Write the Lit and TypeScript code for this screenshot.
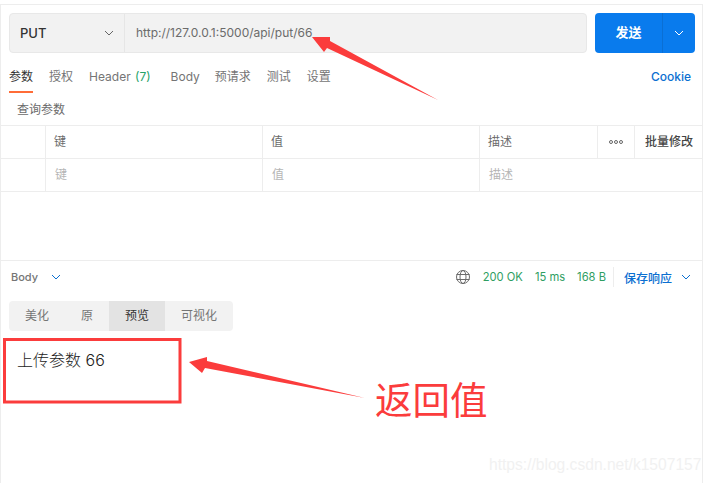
import { LitElement, css, html, svg } from "lit";
import { customElement } from "lit/decorators.js";

const TABS = [
  { label: "参数", active: true },
  { label: "授权" },
  { label: "Header", count: "(7)" },
  { label: "Body", wide: true },
  { label: "预请求" },
  { label: "测试" },
  { label: "设置" },
];

const chevron = (color: string) => html`
  <svg class="chevron" width="10" height="6" viewBox="0 0 10 6" fill="none">
    <path d="M1 1l4 4 4-4" stroke=${color} stroke-width="1"></path>
  </svg>
`;

@customElement("app-root")
export class AppRoot extends LitElement {
  static styles = css`
    :host {
      display: block;
      position: relative;
      width: 713px;
      height: 483px;
      overflow: hidden;
      background: #fff;
      font-family: Inter, "Noto Sans CJK SC", sans-serif;
      font-size: 12px;
      color: #6b6b6b;
    }
    .frame {
      box-sizing: border-box;
      width: 703px;
      height: 479px;
      margin-top: 4px;
      border: 1px solid #ededed;
      border-width: 1px 1px 0 1px;
      display: flex;
      flex-direction: column;
    }

    /* request bar */
    .request {
      display: flex;
      gap: 8px;
      margin: 8px 7px 0 8px;
      height: 40px;
    }
    .url-box {
      flex: 1;
      display: flex;
      background: #f2f2f2;
      border: 1px solid #e8e8e8;
      border-radius: 4px;
      box-sizing: border-box;
    }
    .method {
      box-sizing: border-box;
      width: 115px;
      padding: 0 10px;
      display: flex;
      align-items: center;
      justify-content: space-between;
      border-right: 1px solid #e6e6e6;
      font-size: 13px;
      font-weight: 500;
      color: #333;
    }
    .url {
      padding-left: 11px;
      line-height: 37px;
      color: #6b6b6b;
    }
    .send {
      width: 100px;
      display: flex;
      background: #097bed;
      border-radius: 4px;
      color: #fff;
    }
    .send-label {
      width: 67px;
      text-align: center;
      line-height: 38px;
      font-size: 13px;
      font-weight: 700;
      border-right: 1px solid #0a6fd4;
    }
    .send-more {
      flex: 1;
      display: flex;
      align-items: center;
      justify-content: center;
    }

    /* tabs */
    .tabs {
      display: flex;
      align-items: stretch;
      gap: 16px;
      height: 31px;
      margin: 9px 11px 0 8px;
    }
    .tab {
      padding-top: 6px;
      box-sizing: border-box;
      line-height: 17px;
      color: #757575;
      white-space: nowrap;
    }
    .tab.active {
      color: #333;
      border-bottom: 2px solid #ff6c37;
    }
    .tab.wide {
      margin: 0 -1px 0 4px;
    }
    .count {
      color: #26a269;
      margin-left: 1px;
    }
    .cookie {
      margin-left: auto;
      padding-top: 6px;
      line-height: 17px;
      font-weight: 500;
      color: #0b6fd1;
    }
    .query-title {
      height: 32px;
      padding-left: 16px;
      line-height: 33px;
      color: #6b6b6b;
    }

    /* params table */
    .table {
      display: grid;
      grid-template-columns: 45px 217px 217px 118px 37px 1fr;
      border-top: 1px solid #ededed;
    }
    .cell {
      box-sizing: border-box;
      height: 33px;
      padding-left: 8px;
      line-height: 32px;
      border-right: 1px solid #ededed;
      border-bottom: 1px solid #ededed;
      color: #6b6b6b;
    }
    .cell.last {
      border-right: 0;
      padding-left: 10px;
      font-weight: 500;
      color: #444;
    }
    .cell.hint {
      padding-left: 9px;
      color: #b5b5b5;
    }
    .cell.span {
      grid-column: span 3;
      border-right: 0;
    }
    .dots {
      display: flex;
      align-items: center;
      justify-content: center;
      gap: 1px;
      padding: 0;
    }
    .dots i {
      width: 4px;
      height: 4px;
      border: 1px solid #666;
      border-radius: 50%;
      box-sizing: border-box;
    }

    /* response */
    .response {
      margin-top: 68px;
      border-top: 1px solid #ededed;
    }
    .response-bar {
      display: flex;
      align-items: center;
      height: 32px;
      padding: 0 11px 0 10px;
      font-size: 11px;
    }
    .body-label {
      font-weight: 500;
      color: #757575;
      margin-right: 13px;
    }
    .status {
      margin-left: auto;
      display: flex;
      align-items: center;
      font-size: 11.2px;
      color: #2f9e62;
    }
    .status span {
      margin-left: 12px;
    }
    .status .first {
      margin-left: 12px;
    }
    .save {
      display: flex;
      align-items: center;
      gap: 9px;
      margin-left: 7px;
      padding-left: 10px;
      border-left: 1px solid #ededed;
      height: 20px;
      font-size: 12px;
      color: #0b6fd1;
      font-weight: 500;
    }
    .seg {
      display: inline-flex;
      height: 30px;
      margin: 8px 0 0 8px;
      background: #f2f2f2;
      border-radius: 4px;
      overflow: hidden;
    }
    .seg div {
      line-height: 30px;
      text-align: center;
      color: #757575;
    }
    .seg .on {
      background: #e3e3e3;
      color: #333;
    }
    .output {
      margin: 18px 0 0 16px;
      font-size: 16px;
      font-weight: 300;
      line-height: 22px;
      color: #222;
    }

    /* screenshot annotations */
    .marks {
      position: absolute;
      inset: 0;
      pointer-events: none;
    }
    .note {
      position: absolute;
      left: 375px;
      top: 373px;
      font-family: "Noto Sans CJK SC", sans-serif;
      font-size: 37.5px;
      line-height: 50px;
      color: #fb3c3c;
    }
    .watermark {
      position: absolute;
      left: 489px;
      top: 455px;
      white-space: nowrap;
      font-family: "Liberation Sans", sans-serif;
      font-size: 15.6px;
      line-height: 20px;
      color: #f1f1f1;
    }
  `;

  private renderMarks() {
    return svg`
      <rect x="4.5" y="339.5" width="175.5" height="62.5" fill="none" stroke="#fb3c3c" stroke-width="3"></rect>
      <path fill="#fb3c3c" d="M312 37L330 37L330 41L438 100L327 48L324 52Z"></path>
      <path fill="#fb3c3c" d="M189 362L207 357L207 361L365 398L205 368L202 373Z"></path>
    `;
  }

  render() {
    return html`
      <div class="frame">
        <div class="request">
          <div class="url-box">
            <div class="method">PUT ${chevron("#666")}</div>
            <div class="url">http://127.0.0.1:5000/api/put/66</div>
          </div>
          <div class="send">
            <div class="send-label">发送</div>
            <div class="send-more">${chevron("#fff")}</div>
          </div>
        </div>

        <div class="tabs">
          ${TABS.map(
            (t) => html`<div class="tab ${t.active ? "active" : ""} ${t.wide ? "wide" : ""}">
              ${t.label}${t.count ? html` <span class="count">${t.count}</span>` : ""}
            </div>`
          )}
          <div class="cookie">Cookie</div>
        </div>
        <div class="query-title">查询参数</div>

        <div class="table">
          <div class="cell"></div>
          <div class="cell">键</div>
          <div class="cell">值</div>
          <div class="cell">描述</div>
          <div class="cell dots"><i></i><i></i><i></i></div>
          <div class="cell last">批量修改</div>
          <div class="cell"></div>
          <div class="cell hint">键</div>
          <div class="cell hint">值</div>
          <div class="cell hint span">描述</div>
        </div>

        <div class="response">
          <div class="response-bar">
            <div class="body-label">Body</div>
            ${chevron("#0b6fd1")}
            <div class="status">
              <svg width="16" height="16" viewBox="0 0 16 16" fill="none" stroke="#6b6b6b">
                <circle cx="8" cy="8" r="6.5"></circle>
                <ellipse cx="8" cy="8" rx="3" ry="6.5"></ellipse>
                <path d="M1.5 5.5h13M1.5 10.5h13"></path>
              </svg>
              <span class="first">200 OK</span>
              <span>15 ms</span>
              <span>168 B</span>
            </div>
            <div class="save">保存响应 ${chevron("#0b6fd1")}</div>
          </div>
          <div class="seg">
            <div style="width:56px">美化</div>
            <div style="width:44px">原</div>
            <div class="on" style="width:56px">预览</div>
            <div style="width:68px">可视化</div>
          </div>
          <div class="output">上传参数 66</div>
        </div>
      </div>

      <svg class="marks" width="713" height="483">${this.renderMarks()}</svg>
      <div class="note">返回值</div>
      <div class="watermark">https://blog.csdn.net/k1507157</div>
    `;
  }
}
